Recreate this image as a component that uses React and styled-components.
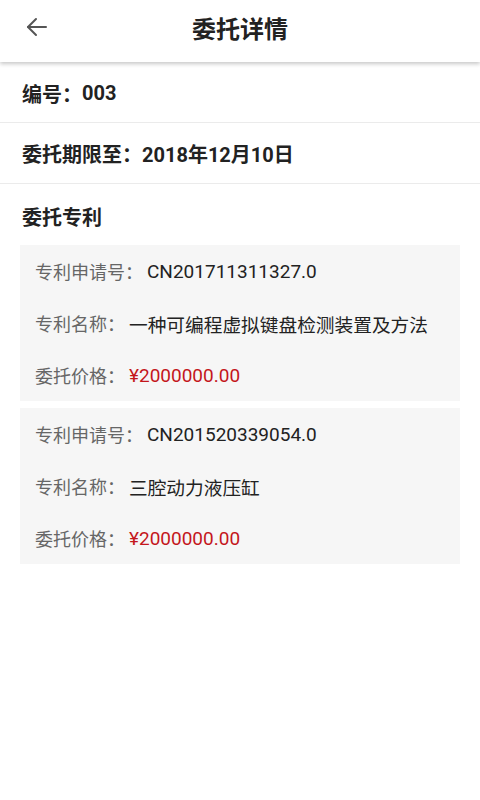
import React from 'react';
import styled, { createGlobalStyle } from 'styled-components';

const patents = [
    { id: 1, no: 'CN201711311327.0', name: '一种可编程虚拟键盘检测装置及方法', price: '¥2000000.00' },
    { id: 2, no: 'CN201520339054.0', name: '三腔动力液压缸', price: '¥2000000.00' }
];

export default function App() {
    return (
        <Root>
            <GlobalStyle />
            <Header>
                <Back aria-label="back">
                    <svg width="24" height="24" viewBox="0 0 24 24" fill="none" stroke="#555" strokeWidth="2" strokeLinecap="round" strokeLinejoin="round">
                        <path d="M21 12H3" />
                        <path d="M11 4l-8 8 8 8" />
                    </svg>
                </Back>
                <Title>委托详情</Title>
            </Header>
            <InfoRow first>
                <Cjk>编号：</Cjk>003
            </InfoRow>
            <InfoRow>
                <Cjk>委托期限至：</Cjk>2018年12月10日
            </InfoRow>
            <Section>
                <Heading>委托专利</Heading>
                {patents.map(p => (
                    <Card key={p.id}>
                        <Line>
                            <Label>专利申请号：</Label>
                            <Value>{p.no}</Value>
                        </Line>
                        <Line>
                            <Label>专利名称：</Label>
                            <Value cjk>{p.name}</Value>
                        </Line>
                        <Line>
                            <Label>委托价格：</Label>
                            <Value red>{p.price}</Value>
                        </Line>
                    </Card>
                ))}
            </Section>
        </Root>
    );
}

const GlobalStyle = createGlobalStyle`
    body {
        margin: 0;
        background: #fff;
        font-family: Roboto, "Noto Sans CJK SC", sans-serif;
    }
`;

const Root = styled.div`
    width: 480px;
    min-height: 800px;
    background: #fff;
`;

const Header = styled.div`
    position: relative;
    height: 62px;
    display: flex;
    align-items: center;
    justify-content: center;
    background: #fff;
    box-shadow: 0 2px 4px rgba(0, 0, 0, 0.22);
`;

const Back = styled.div`
    position: absolute;
    left: 25px;
    top: 15px;
    width: 24px;
    height: 24px;
`;

const Title = styled.h1`
    margin: 0;
    margin-top: -8px;
    font-size: 24px;
    font-weight: 700;
    color: #222;
`;

const Cjk = styled.span`
    font-family: "Noto Sans CJK SC", sans-serif;
`;

const InfoRow = styled.div`
    height: ${p => (p.first ? '58px' : '60px')};
    display: flex;
    align-items: center;
    padding-left: 22px;
    padding-top: ${p => (p.first ? '2px' : '0')};
    font-size: 20px;
    font-weight: 700;
    color: #222;
    border-bottom: 1px solid #ebebeb;
`;

const Section = styled.div`
    padding: 0 20px;
`;

const Heading = styled.h2`
    margin: 20px 2px 13px;
    line-height: 28px;
    font-size: 20px;
    font-weight: 700;
    color: #222;
`;

const Card = styled.div`
    background: #f6f6f6;
    padding: 0 15px;
    margin-bottom: 7px;
`;

const Line = styled.div`
    height: 52px;
    display: flex;
    align-items: center;
    font-size: 18px;
`;

const Label = styled.span`
    font-family: "Noto Sans CJK SC", sans-serif;
    color: #666;
    margin-right: 4px;
`;

const Value = styled.span`
    font-size: ${p => (p.cjk ? '18.7px' : '19px')};
    color: ${p => (p.red ? '#c4161c' : '#222')};
`;
